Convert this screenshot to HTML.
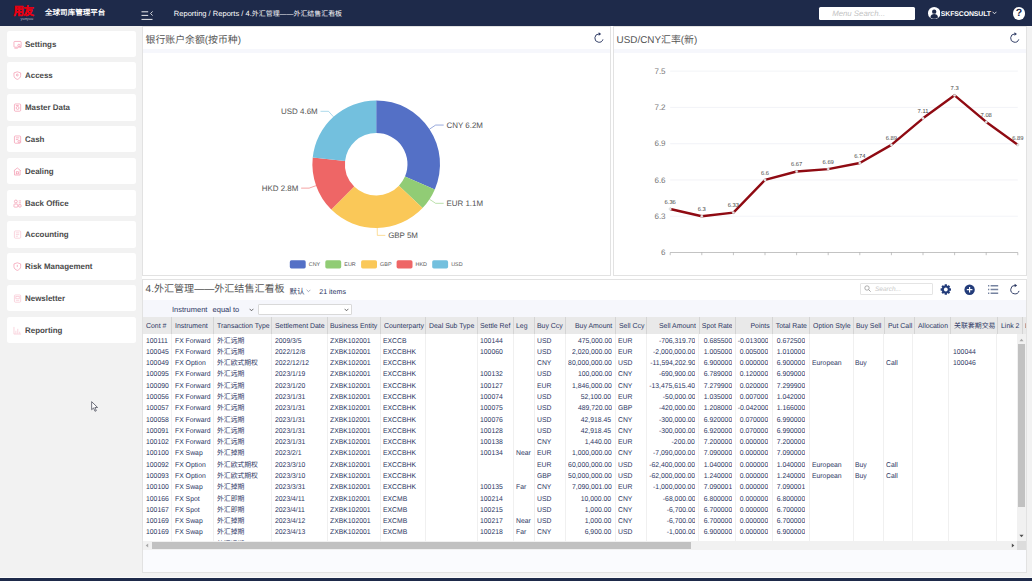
<!DOCTYPE html>
<html lang="zh-CN"><head><meta charset="utf-8"><title>Treasury Dashboard</title>
<style>
*{box-sizing:border-box;margin:0;padding:0}
html,body{width:1032px;height:581px;overflow:hidden}
body{position:relative;background:#f2f2f2;font-family:"Liberation Sans",sans-serif;color:#333;-webkit-font-smoothing:antialiased;text-rendering:geometricPrecision}
.abs{position:absolute}
#topbar{position:absolute;left:0;top:0;width:1032px;height:25.5px;background:#1e2a4a;color:#fff}
#sidebar{position:absolute;left:0;top:25.5px;width:137px;height:552.3px;background:#f2f2f2}
.nav{position:absolute;left:6.8px;width:129.5px;height:26.6px;background:#fff;border-radius:2.5px;font-weight:bold;font-size:8.1px;color:#4a4a4a;line-height:27.9px;padding-left:18.2px;white-space:nowrap}
.nav span{display:inline-block;transform:scaleX(.98);transform-origin:left center}
.nav svg{position:absolute;left:6px;top:9px;width:9px;height:9px}
.panel{position:absolute;background:#fff;overflow:hidden}
.panel:after{content:'';position:absolute;left:0;top:0;right:0;bottom:0;border:0.6px solid #e2e2e2;pointer-events:none}
.ptitle{position:absolute;left:3.4px;top:9.3px;font-size:9.9px;line-height:12px;color:#555;white-space:nowrap}
.band{position:absolute;left:0;right:0;background:#f6f7fc}
#bottombar{position:absolute;left:0;top:577.8px;width:1032px;height:3.2px;background:#1e2a4a}
.col{position:absolute;top:0;overflow:hidden;white-space:nowrap}
.th{position:absolute;top:0;height:16.4px;line-height:18.6px;font-size:7.1px;color:#2c3663;white-space:nowrap;overflow:hidden}
.th span,.td span{display:inline-block;transform:scaleX(.975);transform-origin:left center}
.r span{transform-origin:right center}
.td{position:absolute;height:11.29px;line-height:11.29px;font-size:7px;color:#2c3663;white-space:nowrap;overflow:hidden}
.r{text-align:right}
.vline{position:absolute;width:0.6px;background:#f0f0f0}
</style></head>
<body>
<div id="topbar">
<div class="abs" style="left:13.4px;top:5.6px;font-size:10.4px;line-height:12px;font-weight:bold;color:#e60012;-webkit-text-stroke:0.3px #e60012;letter-spacing:-0.4px;white-space:nowrap;transform:scaleY(1.1);transform-origin:left top">用友</div>
<div class="abs" style="left:20.6px;top:16.6px;font-size:3.9px;line-height:4px;color:#b9b9c6;white-space:nowrap">yonyou</div>
<div class="abs" style="left:45px;top:7.2px;font-size:7.55px;line-height:11px;font-weight:bold;color:#fff;white-space:nowrap">全球司库管理平台</div>
<svg class="abs" style="left:140.5px;top:9.7px" width="13" height="11" viewBox="0 0 13 11"><g stroke="#fff" stroke-width="0.9" fill="none"><path d="M0.5 1.8H7.2M0.5 5.4H7.2M0.5 9.4H11.5"/><path d="M11.6 1.4L9.6 3.5L11.6 5.6" stroke-width="0.8"/></g></svg>
<div class="abs" style="left:173.8px;top:8.2px;font-size:7.55px;line-height:11px;color:#fff;white-space:nowrap">Reporting / Reports / 4.<span style="font-size:6.95px">外汇管理——外汇结售汇看板</span></div>
<div class="abs" style="left:818.7px;top:6.7px;width:96.6px;height:13.8px;background:#fff;border-radius:1.5px;font-size:7.8px;line-height:14.6px;font-style:italic;color:#c3c3c3;padding-left:13.5px;white-space:nowrap">Menu Search...</div>
<svg class="abs" style="left:927.6px;top:6.8px" width="12.4" height="12.4" viewBox="0 0 24 24"><circle cx="12" cy="12" r="12" fill="#fff"/><circle cx="12" cy="9" r="4.2" fill="#1e2a4a"/><path d="M4.6 20.2c.6-4.6 3.6-6.4 7.4-6.4s6.800 1.800 7.400 6.400c-2 1.800-4.600 2.600-7.400 2.600s-5.400-.8-7.400-2.600z" fill="#1e2a4a"/></svg>
<div class="abs" style="left:940.8px;top:9.1px;font-size:6.9px;line-height:11px;font-weight:bold;color:#fff;white-space:nowrap;letter-spacing:-0.1px">SKFSCONSULT</div>
<svg class="abs" style="left:992.3px;top:11.3px" width="5" height="4" viewBox="0 0 5 4"><path d="M0.6 0.8L2.5 2.8L4.4 0.8" stroke="#fff" stroke-width="0.8" fill="none"/></svg>
<div class="abs" style="left:1012.6px;top:7.4px;width:12.6px;height:12.6px;border-radius:50%;background:#fff;color:#1e2a4a;font-weight:bold;font-size:10.5px;line-height:12.9px;text-align:center">?</div>
</div>
<div id="sidebar"></div>
<div class="nav" style="top:30.50px"><svg viewBox="0 0 9.400 9.400"><g fill="none" stroke="#f391a9" stroke-width="0.700"><rect x="1" y="1.5" width="7.5" height="6" rx="0.8"/><path d="M1.5 8.6H5"/><circle cx="6.2" cy="5.6" r="1.2"/><path d="M7 6.6L8.4 8.2"/></g></svg><span>Settings</span></div>
<div class="nav" style="top:62.30px"><svg viewBox="0 0 9.400 9.400"><g fill="none" stroke="#f391a9" stroke-width="0.700"><path d="M4.5 0.8L8 2V4.8C8 6.8 6.5 8 4.5 8.8C2.500 8 1 6.800 1 4.800V2Z"/><circle cx="4.5" cy="4.200" r="1"/></g></svg><span>Access</span></div>
<div class="nav" style="top:94.10px"><svg viewBox="0 0 9.400 9.400"><g fill="none" stroke="#f391a9" stroke-width="0.700"><rect x="1.500" y="1" width="6.500" height="7.600" rx="1"/><circle cx="4.800" cy="5.200" r="1.500"/><path d="M3 2.600H6"/></g></svg><span>Master Data</span></div>
<div class="nav" style="top:125.90px"><svg viewBox="0 0 9.400 9.400"><g fill="none" stroke="#f391a9" stroke-width="0.700"><rect x="1.500" y="1" width="6.500" height="7.600" rx="1"/><path d="M3 3H6.500M3 4.800H5.500"/><circle cx="6.300" cy="6.800" r="1.100"/></g></svg><span>Cash</span></div>
<div class="nav" style="top:157.70px"><svg viewBox="0 0 9.400 9.400"><g fill="none" stroke="#f391a9" stroke-width="0.700"><path d="M0.800 4L4.500 1L8.200 4"/><path d="M1.600 3.600V8.400H7.400V3.600"/><rect x="3.400" y="5" width="2.200" height="2.200"/></g></svg><span>Dealing</span></div>
<div class="nav" style="top:189.50px"><svg viewBox="0 0 9.400 9.400"><g fill="none" stroke="#f391a9" stroke-width="0.700"><circle cx="3" cy="2.600" r="1.500"/><rect x="1" y="5.300" width="4" height="3.200" rx="0.600"/><path d="M6 2H8.400M6 4H8.400"/><rect x="6" y="5.800" width="2.400" height="2.600" rx="0.500"/></g></svg><span>Back Office</span></div>
<div class="nav" style="top:221.30px"><svg viewBox="0 0 9.400 9.400"><g fill="none" stroke="#f391a9" stroke-width="0.700" style="opacity:.55"><rect x="1.500" y="1" width="6.500" height="7.600" rx="1"/><path d="M3 3H6.500M3 4.800H6.500M3 6.600H5"/></g></svg><span>Accounting</span></div>
<div class="nav" style="top:253.10px"><svg viewBox="0 0 9.400 9.400"><g fill="none" stroke="#f391a9" stroke-width="0.700"><path d="M4.500 0.800L8 2V4.800C8 6.800 6.500 8 4.500 8.800C2.500 8 1 6.800 1 4.800V2Z"/><path d="M4.500 3V5.200M4.500 6.200V6.400"/></g></svg><span>Risk Management</span></div>
<div class="nav" style="top:284.90px"><svg viewBox="0 0 9.400 9.400"><g fill="none" stroke="#f391a9" stroke-width="0.700" style="opacity:.55"><rect x="1.500" y="1" width="6.500" height="7.600" rx="1"/><rect x="3" y="2.600" width="3.500" height="2.400"/><path d="M3 6.600H6.500"/></g></svg><span>Newsletter</span></div>
<div class="nav" style="top:316.70px"><svg viewBox="0 0 9.400 9.400"><g fill="none" stroke="#f391a9" stroke-width="0.700" style="opacity:.55"><path d="M1 1V8.400H8.400"/><path d="M3 8V5M5 8V3M7 8V6"/></g></svg><span>Reporting</span></div>
<div class="abs" style="left:142.1px;top:25.5px;width:884.8px;height:547.6px;background:#fff"></div>
<div class="panel" id="p1" style="left:142.2px;top:26.0px;width:468.5px;height:249.6px">
<div class="ptitle">银行账户余额(按币种)</div>
<div class="band" style="top:22.6px;height:4.5px"></div>
<svg class="abs" style="left:0;top:0;overflow:visible" width="1" height="1"><path d="M460.95 13.38A4.15 4.15 0 1 1 456.86 7.95" fill="none" stroke="#2a3761" stroke-width="0.95"/><path d="M456.66 6.25L459.16 8.10L456.66 9.75Z" fill="#2a3761"/></svg>
<svg class="abs" style="left:0;top:0" width="468.5" height="249.6"><path d="M234.20 74.40A63.80 63.80 0 0 1 292.80 163.44L262.95 150.58A31.30 31.30 0 0 0 234.20 106.90Z" fill="#5470c6"/><path d="M287.49 103.13L293.68 99.06L301.68 99.06" fill="none" stroke="#5470c6" stroke-width="0.6"/><text x="304.48" y="101.66" font-size="7.95" fill="#525252" text-anchor="start">CNY 6.2M</text><path d="M292.80 163.44A63.80 63.80 0 0 1 280.55 182.04L256.94 159.71A31.30 31.30 0 0 0 262.95 150.58Z" fill="#91cc75"/><path d="M287.49 173.27L293.68 177.34L301.68 177.34" fill="none" stroke="#91cc75" stroke-width="0.6"/><text x="304.48" y="179.94" font-size="7.95" fill="#525252" text-anchor="start">EUR 1.1M</text><path d="M280.55 182.04A63.80 63.80 0 0 1 189.27 183.49L212.16 160.42A31.30 31.30 0 0 0 256.94 159.71Z" fill="#fac858"/><path d="M235.22 201.99L235.34 209.39L243.34 209.39" fill="none" stroke="#fac858" stroke-width="0.6"/><text x="246.14" y="211.99" font-size="7.95" fill="#525252" text-anchor="start">GBP 5M</text><path d="M189.27 183.49A63.80 63.80 0 0 1 170.74 131.60L203.07 134.96A31.30 31.30 0 0 0 212.16 160.42Z" fill="#ee6666"/><path d="M174.11 159.65L167.14 162.14L159.14 162.14" fill="none" stroke="#ee6666" stroke-width="0.6"/><text x="156.34" y="164.74" font-size="7.95" fill="#525252" text-anchor="end">HKD 2.8M</text><path d="M170.74 131.60A63.80 63.80 0 0 1 234.20 74.40L234.20 106.90A31.30 31.30 0 0 0 203.07 134.96Z" fill="#73c0de"/><path d="M191.48 90.81L186.53 85.31L178.53 85.31" fill="none" stroke="#73c0de" stroke-width="0.6"/><text x="175.73" y="87.91" font-size="7.95" fill="#525252" text-anchor="end">USD 4.6M</text><rect x="147.80" y="234.30" width="15.9" height="8.1" rx="1.6" fill="#5470c6"/><text x="166.80" y="240.30" font-size="5.4" fill="#555">CNY</text><rect x="183.30" y="234.30" width="15.9" height="8.1" rx="1.6" fill="#91cc75"/><text x="202.30" y="240.30" font-size="5.4" fill="#555">EUR</text><rect x="219.10" y="234.30" width="15.9" height="8.1" rx="1.6" fill="#fac858"/><text x="238.10" y="240.30" font-size="5.4" fill="#555">GBP</text><rect x="254.60" y="234.30" width="15.9" height="8.1" rx="1.6" fill="#ee6666"/><text x="273.60" y="240.30" font-size="5.4" fill="#555">HKD</text><rect x="290.20" y="234.30" width="15.9" height="8.1" rx="1.6" fill="#73c0de"/><text x="309.20" y="240.30" font-size="5.4" fill="#555">USD</text></svg>
</div>
<div class="panel" id="p2" style="left:613.2px;top:26.0px;width:413.4px;height:249.6px">
<div class="ptitle">USD/CNY汇率(新)</div>
<div class="band" style="top:22.6px;height:4.5px"></div>
<svg class="abs" style="left:0;top:0;overflow:visible" width="1" height="1"><path d="M405.75 13.38A4.15 4.15 0 1 1 401.66 7.95" fill="none" stroke="#2a3761" stroke-width="0.95"/><path d="M401.46 6.25L403.96 8.10L401.46 9.75Z" fill="#2a3761"/></svg>
<svg class="abs" style="left:0;top:0" width="413.4" height="249.6" font-family="Liberation Sans, sans-serif"><text x="52.60" y="229.30" font-size="8.05" fill="#787878" text-anchor="end">6</text><path d="M57.20 190.23H404.80" stroke="#e9ebf2" stroke-width="0.6"/><text x="52.60" y="193.03" font-size="8.05" fill="#787878" text-anchor="end">6.3</text><path d="M57.20 153.96H404.80" stroke="#e9ebf2" stroke-width="0.6"/><text x="52.60" y="156.76" font-size="8.05" fill="#787878" text-anchor="end">6.6</text><path d="M57.20 117.69H404.80" stroke="#e9ebf2" stroke-width="0.6"/><text x="52.60" y="120.49" font-size="8.05" fill="#787878" text-anchor="end">6.9</text><path d="M57.20 81.42H404.80" stroke="#e9ebf2" stroke-width="0.6"/><text x="52.60" y="84.22" font-size="8.05" fill="#787878" text-anchor="end">7.2</text><path d="M57.20 45.15H404.80" stroke="#e9ebf2" stroke-width="0.6"/><text x="52.60" y="47.95" font-size="8.05" fill="#787878" text-anchor="end">7.5</text><path d="M57.20 226.50H404.80" stroke="#9a9a9a" stroke-width="0.6"/><path d="M57.20 226.50v2.7" stroke="#9a9a9a" stroke-width="0.6"/><path d="M88.80 226.50v2.7" stroke="#9a9a9a" stroke-width="0.6"/><path d="M120.40 226.50v2.7" stroke="#9a9a9a" stroke-width="0.6"/><path d="M152.00 226.50v2.7" stroke="#9a9a9a" stroke-width="0.6"/><path d="M183.60 226.50v2.7" stroke="#9a9a9a" stroke-width="0.6"/><path d="M215.20 226.50v2.7" stroke="#9a9a9a" stroke-width="0.6"/><path d="M246.80 226.50v2.7" stroke="#9a9a9a" stroke-width="0.6"/><path d="M278.40 226.50v2.7" stroke="#9a9a9a" stroke-width="0.6"/><path d="M310.00 226.50v2.7" stroke="#9a9a9a" stroke-width="0.6"/><path d="M341.60 226.50v2.7" stroke="#9a9a9a" stroke-width="0.6"/><path d="M373.20 226.50v2.7" stroke="#9a9a9a" stroke-width="0.6"/><path d="M404.80 226.50v2.7" stroke="#9a9a9a" stroke-width="0.6"/><polyline points="57.20,182.98 88.80,190.23 120.40,186.60 152.00,153.96 183.60,145.50 215.20,143.08 246.80,137.03 278.40,118.90 310.00,92.30 341.60,69.33 373.20,95.93 404.80,118.90" fill="none" stroke="#8f0a12" stroke-width="2.4" stroke-linejoin="round"/><circle cx="57.20" cy="182.98" r="1.2" fill="#ececec" stroke="#c4c4c4" stroke-width="0.45"/><text x="57.20" y="177.78" font-size="5.8" fill="#444" text-anchor="middle">6.36</text><circle cx="88.80" cy="190.23" r="1.2" fill="#ececec" stroke="#c4c4c4" stroke-width="0.45"/><text x="88.80" y="185.03" font-size="5.8" fill="#444" text-anchor="middle">6.3</text><circle cx="120.40" cy="186.60" r="1.2" fill="#ececec" stroke="#c4c4c4" stroke-width="0.45"/><text x="120.40" y="181.40" font-size="5.8" fill="#444" text-anchor="middle">6.33</text><circle cx="152.00" cy="153.96" r="1.2" fill="#ececec" stroke="#c4c4c4" stroke-width="0.45"/><text x="152.00" y="148.76" font-size="5.8" fill="#444" text-anchor="middle">6.6</text><circle cx="183.60" cy="145.50" r="1.2" fill="#ececec" stroke="#c4c4c4" stroke-width="0.45"/><text x="183.60" y="140.30" font-size="5.8" fill="#444" text-anchor="middle">6.67</text><circle cx="215.20" cy="143.08" r="1.2" fill="#ececec" stroke="#c4c4c4" stroke-width="0.45"/><text x="215.20" y="137.88" font-size="5.8" fill="#444" text-anchor="middle">6.69</text><circle cx="246.80" cy="137.03" r="1.2" fill="#ececec" stroke="#c4c4c4" stroke-width="0.45"/><text x="246.80" y="131.83" font-size="5.8" fill="#444" text-anchor="middle">6.74</text><circle cx="278.40" cy="118.90" r="1.2" fill="#ececec" stroke="#c4c4c4" stroke-width="0.45"/><text x="278.40" y="113.70" font-size="5.8" fill="#444" text-anchor="middle">6.89</text><circle cx="310.00" cy="92.30" r="1.2" fill="#ececec" stroke="#c4c4c4" stroke-width="0.45"/><text x="310.00" y="87.10" font-size="5.8" fill="#444" text-anchor="middle">7.11</text><circle cx="341.60" cy="69.33" r="1.2" fill="#ececec" stroke="#c4c4c4" stroke-width="0.45"/><text x="341.60" y="64.13" font-size="5.8" fill="#444" text-anchor="middle">7.3</text><circle cx="373.20" cy="95.93" r="1.2" fill="#ececec" stroke="#c4c4c4" stroke-width="0.45"/><text x="373.20" y="90.73" font-size="5.8" fill="#444" text-anchor="middle">7.08</text><circle cx="404.80" cy="118.90" r="1.2" fill="#ececec" stroke="#c4c4c4" stroke-width="0.45"/><text x="404.80" y="113.70" font-size="5.8" fill="#444" text-anchor="middle">6.89</text></svg>
</div>
<div class="panel" id="p3" style="left:142.2px;top:278.5px;width:884.4px;height:294.5px">
<div class="ptitle" style="top:5.3px;left:3.4px;font-size:10.05px">4.外汇管理——外汇结售汇看板</div>
<div class="abs" style="left:147.4px;top:8.2px;font-size:7.5px;line-height:9px;color:#2c3663;white-space:nowrap">默认</div>
<svg class="abs" style="left:164.2px;top:10.2px" width="5" height="4" viewBox="0 0 5 4"><path d="M0.600 0.800L2.500 2.700L4.400 0.800" stroke="#6a7390" stroke-width="0.600" fill="none"/></svg>
<div class="abs" style="left:177.0px;top:9.7px;font-size:7.1px;line-height:9px;color:#2c3663;white-space:nowrap">21 items</div>
<div class="abs" style="left:718.2px;top:4.7px;width:72.8px;height:11.4px;border:0.6px solid #e4e4e4;border-radius:1px;font-size:6.5px;line-height:12.4px;font-style:italic;color:#c9c9c9;padding-left:13.6px;white-space:nowrap">Search...</div>
<svg class="abs" style="left:721.8px;top:6.6px" width="7.5" height="7.5" viewBox="0 0 7.5 7.5"><circle cx="3" cy="3" r="2.200" fill="none" stroke="#8c8c8c" stroke-width="0.700"/><path d="M4.600 4.600L6.600 6.600" stroke="#8c8c8c" stroke-width="0.800"/></svg>
<svg class="abs" style="left:0;top:0;overflow:visible" width="1" height="1"><g transform="translate(803.80 10.50)" fill="#233c7a"><circle r="3.900"/><rect x="-1.15" y="-5.2" width="2.300" height="2.600" rx="0.300" transform="rotate(0)"/><rect x="-1.15" y="-5.2" width="2.300" height="2.600" rx="0.300" transform="rotate(45)"/><rect x="-1.15" y="-5.2" width="2.300" height="2.600" rx="0.300" transform="rotate(90)"/><rect x="-1.15" y="-5.2" width="2.300" height="2.600" rx="0.300" transform="rotate(135)"/><rect x="-1.15" y="-5.2" width="2.300" height="2.600" rx="0.300" transform="rotate(180)"/><rect x="-1.15" y="-5.2" width="2.300" height="2.600" rx="0.300" transform="rotate(225)"/><rect x="-1.15" y="-5.2" width="2.300" height="2.600" rx="0.300" transform="rotate(270)"/><rect x="-1.15" y="-5.2" width="2.300" height="2.600" rx="0.300" transform="rotate(315)"/><circle r="1.900" fill="#fff"/></g></svg>
<svg class="abs" style="left:0;top:0;overflow:visible" width="1" height="1"><g transform="translate(827.60 10.70)"><circle r="5.200" fill="#233c7a"/><path d="M-2.800 0H2.800M0 -2.800V2.800" stroke="#fff" stroke-width="1.200"/></g></svg>
<svg class="abs" style="left:846.00px;top:6.40px" width="10.400" height="9.400" viewBox="0 0 10.400 9.400"><g stroke="#7683a0" stroke-width="1.450"><path d="M0 0.8H1.300M2.600 0.8H10.200"/><path d="M0 4.5H1.300M2.600 4.5H10.200"/><path d="M0 8.3H1.300M2.600 8.3H10.200"/></g></svg>
<svg class="abs" style="left:0;top:0;overflow:visible" width="1" height="1"><path d="M877.04 11.91A4.25 4.25 0 1 1 872.85 6.35" fill="none" stroke="#2a3761" stroke-width="0.95"/><path d="M872.65 4.65L875.15 6.50L872.65 8.15Z" fill="#2a3761"/></svg>
<div class="band" style="top:21.5px;height:17.4px"></div>
<div class="abs" style="left:29.8px;top:26.8px;font-size:7.5px;line-height:9px;color:#2c3663;white-space:nowrap">Instrument</div>
<div class="abs" style="left:70.4px;top:26.8px;font-size:7.5px;line-height:9px;color:#2c3663;white-space:nowrap">equal to</div>
<svg class="abs" style="left:106.6px;top:29.1px" width="5" height="4" viewBox="0 0 5 4"><path d="M0.600 0.800L2.500 2.800L4.400 0.800" stroke="#333" stroke-width="0.700" fill="none"/></svg>
<div class="abs" style="left:116.2px;top:25.5px;width:94px;height:10.600px;background:#fff;border:0.600px solid #d9d9d9;border-radius:1px"></div>
<svg class="abs" style="left:201.4px;top:29.1px" width="5" height="4" viewBox="0 0 5 4"><path d="M0.600 0.800L2.500 2.800L4.400 0.800" stroke="#333" stroke-width="0.700" fill="none"/></svg>
<div class="abs" id="tbl" style="left:0;top:38.90px;width:884.4px;height:224.20px;overflow:hidden">
<div class="abs" style="left:0;top:0;width:100%;height:16.4px;background:#e9e9e9"></div>
<div class="th" style="left:3.60px;width:25.10px"><span>Cont #</span></div>
<div class="vline" style="left:28.90px;top:0;height:16.4px;background:#d4d4d4"></div>
<div class="vline" style="left:28.90px;top:16.4px;height:207.8px"></div>
<div class="th" style="left:32.80px;width:38.30px"><span>Instrument</span></div>
<div class="vline" style="left:71.30px;top:0;height:16.4px;background:#d4d4d4"></div>
<div class="vline" style="left:71.30px;top:16.4px;height:207.8px"></div>
<div class="th" style="left:75.10px;width:53.60px"><span>Transaction Type</span></div>
<div class="vline" style="left:128.90px;top:0;height:16.4px;background:#d4d4d4"></div>
<div class="vline" style="left:128.90px;top:16.4px;height:207.8px"></div>
<div class="th" style="left:132.90px;width:51.50px"><span>Settlement Date</span></div>
<div class="vline" style="left:184.60px;top:0;height:16.4px;background:#d4d4d4"></div>
<div class="vline" style="left:184.60px;top:16.4px;height:207.8px"></div>
<div class="th" style="left:187.80px;width:50.00px"><span>Business Entity</span></div>
<div class="vline" style="left:238.00px;top:0;height:16.4px;background:#d4d4d4"></div>
<div class="vline" style="left:238.00px;top:16.4px;height:207.8px"></div>
<div class="th" style="left:241.60px;width:41.50px"><span>Counterparty</span></div>
<div class="vline" style="left:283.30px;top:0;height:16.4px;background:#d4d4d4"></div>
<div class="vline" style="left:283.30px;top:16.4px;height:207.8px"></div>
<div class="th" style="left:287.00px;width:47.40px"><span>Deal Sub Type</span></div>
<div class="vline" style="left:334.60px;top:0;height:16.4px;background:#d4d4d4"></div>
<div class="vline" style="left:334.60px;top:16.4px;height:207.8px"></div>
<div class="th" style="left:337.80px;width:33.00px"><span>Settle Ref</span></div>
<div class="vline" style="left:371.00px;top:0;height:16.4px;background:#d4d4d4"></div>
<div class="vline" style="left:371.00px;top:16.4px;height:207.8px"></div>
<div class="th" style="left:373.70px;width:17.70px"><span>Leg</span></div>
<div class="vline" style="left:391.60px;top:0;height:16.4px;background:#d4d4d4"></div>
<div class="vline" style="left:391.60px;top:16.4px;height:207.8px"></div>
<div class="th" style="left:394.80px;width:28.00px"><span>Buy Ccy</span></div>
<div class="vline" style="left:423.00px;top:0;height:16.4px;background:#d4d4d4"></div>
<div class="vline" style="left:422.80px;top:16.4px;height:207.8px"></div>
<div class="th r" style="left:423.80px;width:46.70px"><span>Buy Amount</span></div>
<div class="vline" style="left:472.70px;top:0;height:16.4px;background:#d4d4d4"></div>
<div class="vline" style="left:472.50px;top:16.4px;height:207.8px"></div>
<div class="th" style="left:476.70px;width:27.20px"><span>Sell Ccy</span></div>
<div class="vline" style="left:504.10px;top:0;height:16.4px;background:#d4d4d4"></div>
<div class="vline" style="left:503.80px;top:16.4px;height:207.8px"></div>
<div class="th r" style="left:504.90px;width:49.20px"><span>Sell Amount</span></div>
<div class="vline" style="left:556.60px;top:0;height:16.4px;background:#d4d4d4"></div>
<div class="vline" style="left:556.30px;top:16.4px;height:207.8px"></div>
<div class="th r" style="left:557.40px;width:32.80px"><span>Spot Rate</span></div>
<div class="vline" style="left:593.00px;top:0;height:16.4px;background:#d4d4d4"></div>
<div class="vline" style="left:592.70px;top:16.4px;height:207.8px"></div>
<div class="th r" style="left:593.80px;width:34.10px"><span>Points</span></div>
<div class="vline" style="left:629.90px;top:0;height:16.4px;background:#d4d4d4"></div>
<div class="vline" style="left:629.50px;top:16.4px;height:207.8px"></div>
<div class="th r" style="left:630.70px;width:34.30px"><span>Total Rate</span></div>
<div class="vline" style="left:666.80px;top:0;height:16.4px;background:#d4d4d4"></div>
<div class="vline" style="left:666.40px;top:16.4px;height:207.8px"></div>
<div class="th" style="left:670.90px;width:39.70px"><span>Option Style</span></div>
<div class="vline" style="left:710.80px;top:0;height:16.4px;background:#d4d4d4"></div>
<div class="vline" style="left:710.50px;top:16.4px;height:207.8px"></div>
<div class="th" style="left:714.20px;width:27.70px"><span>Buy Sell</span></div>
<div class="vline" style="left:742.10px;top:0;height:16.4px;background:#d4d4d4"></div>
<div class="vline" style="left:741.10px;top:16.4px;height:207.8px"></div>
<div class="th" style="left:745.40px;width:26.40px"><span>Put Call</span></div>
<div class="vline" style="left:772.00px;top:0;height:16.4px;background:#d4d4d4"></div>
<div class="vline" style="left:770.20px;top:16.4px;height:207.8px"></div>
<div class="th" style="left:775.50px;width:32.30px"><span>Allocation</span></div>
<div class="vline" style="left:808.00px;top:0;height:16.4px;background:#d4d4d4"></div>
<div class="vline" style="left:805.90px;top:16.4px;height:207.8px"></div>
<div class="th" style="left:811.50px;width:43.00px"><span>关联套期交易</span></div>
<div class="vline" style="left:854.70px;top:0;height:16.4px;background:#d4d4d4"></div>
<div class="vline" style="left:854.10px;top:16.4px;height:207.8px"></div>
<div class="th" style="left:858.80px;width:21.30px"><span>Link 2</span></div>
<div class="vline" style="left:880.30px;top:0;height:16.4px;background:#d4d4d4"></div>
<div class="vline" style="left:879.50px;top:16.4px;height:207.8px"></div>
<div class="th" style="left:882.40px;width:34.90px"><span>Link 3</span></div>
<div class="td" style="left:4.20px;top:18.20px;width:24.50px"><span>100111</span></div>
<div class="td" style="left:32.80px;top:18.20px;width:38.30px"><span>FX Forward</span></div>
<div class="td" style="left:75.10px;top:18.20px;width:53.60px"><span>外汇远期</span></div>
<div class="td" style="left:132.90px;top:18.20px;width:51.50px"><span>2009/3/5</span></div>
<div class="td" style="left:187.80px;top:18.20px;width:50.00px"><span>ZXBK102001</span></div>
<div class="td" style="left:241.20px;top:18.20px;width:41.90px"><span>EXCCB</span></div>
<div class="td" style="left:338.10px;top:18.20px;width:32.70px"><span>100144</span></div>
<div class="td" style="left:394.80px;top:18.20px;width:27.80px"><span>USD</span></div>
<div class="td r" style="left:423.60px;top:18.20px;width:45.80px"><span>475,000.00</span></div>
<div class="td" style="left:475.90px;top:18.20px;width:27.70px"><span>EUR</span></div>
<div class="td r" style="left:504.60px;top:18.20px;width:48.40px"><span>-706,319.70</span></div>
<div class="td r" style="left:557.10px;top:18.20px;width:32.60px"><span>0.685500</span></div>
<div class="td r" style="left:593.50px;top:18.20px;width:32.80px"><span>-0.013000</span></div>
<div class="td r" style="left:630.30px;top:18.20px;width:32.40px"><span>0.672500</span></div>
<div class="td" style="left:4.20px;top:29.49px;width:24.50px"><span>100045</span></div>
<div class="td" style="left:32.80px;top:29.49px;width:38.30px"><span>FX Forward</span></div>
<div class="td" style="left:75.10px;top:29.49px;width:53.60px"><span>外汇远期</span></div>
<div class="td" style="left:132.90px;top:29.49px;width:51.50px"><span>2022/12/8</span></div>
<div class="td" style="left:187.80px;top:29.49px;width:50.00px"><span>ZXBK102001</span></div>
<div class="td" style="left:241.20px;top:29.49px;width:41.90px"><span>EXCCBHK</span></div>
<div class="td" style="left:338.10px;top:29.49px;width:32.70px"><span>100060</span></div>
<div class="td" style="left:394.80px;top:29.49px;width:27.80px"><span>USD</span></div>
<div class="td r" style="left:423.60px;top:29.49px;width:45.80px"><span>2,020,000.00</span></div>
<div class="td" style="left:475.90px;top:29.49px;width:27.70px"><span>EUR</span></div>
<div class="td r" style="left:504.60px;top:29.49px;width:48.40px"><span>-2,000,000.00</span></div>
<div class="td r" style="left:557.10px;top:29.49px;width:32.60px"><span>1.005000</span></div>
<div class="td r" style="left:593.50px;top:29.49px;width:32.80px"><span>0.005000</span></div>
<div class="td r" style="left:630.30px;top:29.49px;width:32.40px"><span>1.010000</span></div>
<div class="td" style="left:810.50px;top:29.49px;width:43.40px"><span>100044</span></div>
<div class="td" style="left:4.20px;top:40.77px;width:24.50px"><span>100049</span></div>
<div class="td" style="left:32.80px;top:40.77px;width:38.30px"><span>FX Option</span></div>
<div class="td" style="left:75.10px;top:40.77px;width:53.60px"><span>外汇欧式期权</span></div>
<div class="td" style="left:132.90px;top:40.77px;width:51.50px"><span>2022/12/12</span></div>
<div class="td" style="left:187.80px;top:40.77px;width:50.00px"><span>ZXBK102001</span></div>
<div class="td" style="left:241.20px;top:40.77px;width:41.90px"><span>EXCCBHK</span></div>
<div class="td" style="left:394.80px;top:40.77px;width:27.80px"><span>CNY</span></div>
<div class="td r" style="left:423.60px;top:40.77px;width:45.80px"><span>80,000,000.00</span></div>
<div class="td" style="left:475.90px;top:40.77px;width:27.70px"><span>USD</span></div>
<div class="td r" style="left:504.60px;top:40.77px;width:48.40px"><span>-11,594,202.90</span></div>
<div class="td r" style="left:557.10px;top:40.77px;width:32.60px"><span>6.900000</span></div>
<div class="td r" style="left:593.50px;top:40.77px;width:32.80px"><span>0.000000</span></div>
<div class="td r" style="left:630.30px;top:40.77px;width:32.40px"><span>6.900000</span></div>
<div class="td" style="left:669.90px;top:40.77px;width:40.40px"><span>European</span></div>
<div class="td" style="left:713.00px;top:40.77px;width:27.90px"><span>Buy</span></div>
<div class="td" style="left:744.30px;top:40.77px;width:25.70px"><span>Call</span></div>
<div class="td" style="left:810.50px;top:40.77px;width:43.40px"><span>100046</span></div>
<div class="td" style="left:4.20px;top:52.06px;width:24.50px"><span>100095</span></div>
<div class="td" style="left:32.80px;top:52.06px;width:38.30px"><span>FX Forward</span></div>
<div class="td" style="left:75.10px;top:52.06px;width:53.60px"><span>外汇远期</span></div>
<div class="td" style="left:132.90px;top:52.06px;width:51.50px"><span>2023/1/19</span></div>
<div class="td" style="left:187.80px;top:52.06px;width:50.00px"><span>ZXBK102001</span></div>
<div class="td" style="left:241.20px;top:52.06px;width:41.90px"><span>EXCCBHK</span></div>
<div class="td" style="left:338.10px;top:52.06px;width:32.70px"><span>100132</span></div>
<div class="td" style="left:394.80px;top:52.06px;width:27.80px"><span>USD</span></div>
<div class="td r" style="left:423.60px;top:52.06px;width:45.80px"><span>100,000.00</span></div>
<div class="td" style="left:475.90px;top:52.06px;width:27.70px"><span>CNY</span></div>
<div class="td r" style="left:504.60px;top:52.06px;width:48.40px"><span>-690,900.00</span></div>
<div class="td r" style="left:557.10px;top:52.06px;width:32.60px"><span>6.789000</span></div>
<div class="td r" style="left:593.50px;top:52.06px;width:32.80px"><span>0.120000</span></div>
<div class="td r" style="left:630.30px;top:52.06px;width:32.40px"><span>6.909000</span></div>
<div class="td" style="left:4.20px;top:63.34px;width:24.50px"><span>100090</span></div>
<div class="td" style="left:32.80px;top:63.34px;width:38.30px"><span>FX Forward</span></div>
<div class="td" style="left:75.10px;top:63.34px;width:53.60px"><span>外汇远期</span></div>
<div class="td" style="left:132.90px;top:63.34px;width:51.50px"><span>2023/1/20</span></div>
<div class="td" style="left:187.80px;top:63.34px;width:50.00px"><span>ZXBK102001</span></div>
<div class="td" style="left:241.20px;top:63.34px;width:41.90px"><span>EXCCBHK</span></div>
<div class="td" style="left:338.10px;top:63.34px;width:32.70px"><span>100127</span></div>
<div class="td" style="left:394.80px;top:63.34px;width:27.80px"><span>EUR</span></div>
<div class="td r" style="left:423.60px;top:63.34px;width:45.80px"><span>1,846,000.00</span></div>
<div class="td" style="left:475.90px;top:63.34px;width:27.70px"><span>CNY</span></div>
<div class="td r" style="left:504.60px;top:63.34px;width:48.40px"><span>-13,475,615.40</span></div>
<div class="td r" style="left:557.10px;top:63.34px;width:32.60px"><span>7.279900</span></div>
<div class="td r" style="left:593.50px;top:63.34px;width:32.80px"><span>0.020000</span></div>
<div class="td r" style="left:630.30px;top:63.34px;width:32.40px"><span>7.299900</span></div>
<div class="td" style="left:4.20px;top:74.63px;width:24.50px"><span>100056</span></div>
<div class="td" style="left:32.80px;top:74.63px;width:38.30px"><span>FX Forward</span></div>
<div class="td" style="left:75.10px;top:74.63px;width:53.60px"><span>外汇远期</span></div>
<div class="td" style="left:132.90px;top:74.63px;width:51.50px"><span>2023/1/31</span></div>
<div class="td" style="left:187.80px;top:74.63px;width:50.00px"><span>ZXBK102001</span></div>
<div class="td" style="left:241.20px;top:74.63px;width:41.90px"><span>EXCCBHK</span></div>
<div class="td" style="left:338.10px;top:74.63px;width:32.70px"><span>100074</span></div>
<div class="td" style="left:394.80px;top:74.63px;width:27.80px"><span>USD</span></div>
<div class="td r" style="left:423.60px;top:74.63px;width:45.80px"><span>52,100.00</span></div>
<div class="td" style="left:475.90px;top:74.63px;width:27.70px"><span>EUR</span></div>
<div class="td r" style="left:504.60px;top:74.63px;width:48.40px"><span>-50,000.00</span></div>
<div class="td r" style="left:557.10px;top:74.63px;width:32.60px"><span>1.035000</span></div>
<div class="td r" style="left:593.50px;top:74.63px;width:32.80px"><span>0.007000</span></div>
<div class="td r" style="left:630.30px;top:74.63px;width:32.40px"><span>1.042000</span></div>
<div class="td" style="left:4.20px;top:85.91px;width:24.50px"><span>100057</span></div>
<div class="td" style="left:32.80px;top:85.91px;width:38.30px"><span>FX Forward</span></div>
<div class="td" style="left:75.10px;top:85.91px;width:53.60px"><span>外汇远期</span></div>
<div class="td" style="left:132.90px;top:85.91px;width:51.50px"><span>2023/1/31</span></div>
<div class="td" style="left:187.80px;top:85.91px;width:50.00px"><span>ZXBK102001</span></div>
<div class="td" style="left:241.20px;top:85.91px;width:41.90px"><span>EXCCBHK</span></div>
<div class="td" style="left:338.10px;top:85.91px;width:32.70px"><span>100075</span></div>
<div class="td" style="left:394.80px;top:85.91px;width:27.80px"><span>USD</span></div>
<div class="td r" style="left:423.60px;top:85.91px;width:45.80px"><span>489,720.00</span></div>
<div class="td" style="left:475.90px;top:85.91px;width:27.70px"><span>GBP</span></div>
<div class="td r" style="left:504.60px;top:85.91px;width:48.40px"><span>-420,000.00</span></div>
<div class="td r" style="left:557.10px;top:85.91px;width:32.60px"><span>1.208000</span></div>
<div class="td r" style="left:593.50px;top:85.91px;width:32.80px"><span>-0.042000</span></div>
<div class="td r" style="left:630.30px;top:85.91px;width:32.40px"><span>1.166000</span></div>
<div class="td" style="left:4.20px;top:97.20px;width:24.50px"><span>100058</span></div>
<div class="td" style="left:32.80px;top:97.20px;width:38.30px"><span>FX Forward</span></div>
<div class="td" style="left:75.10px;top:97.20px;width:53.60px"><span>外汇远期</span></div>
<div class="td" style="left:132.90px;top:97.20px;width:51.50px"><span>2023/1/31</span></div>
<div class="td" style="left:187.80px;top:97.20px;width:50.00px"><span>ZXBK102001</span></div>
<div class="td" style="left:241.20px;top:97.20px;width:41.90px"><span>EXCCBHK</span></div>
<div class="td" style="left:338.10px;top:97.20px;width:32.70px"><span>100076</span></div>
<div class="td" style="left:394.80px;top:97.20px;width:27.80px"><span>USD</span></div>
<div class="td r" style="left:423.60px;top:97.20px;width:45.80px"><span>42,918.45</span></div>
<div class="td" style="left:475.90px;top:97.20px;width:27.70px"><span>CNY</span></div>
<div class="td r" style="left:504.60px;top:97.20px;width:48.40px"><span>-300,000.00</span></div>
<div class="td r" style="left:557.10px;top:97.20px;width:32.60px"><span>6.920000</span></div>
<div class="td r" style="left:593.50px;top:97.20px;width:32.80px"><span>0.070000</span></div>
<div class="td r" style="left:630.30px;top:97.20px;width:32.40px"><span>6.990000</span></div>
<div class="td" style="left:4.20px;top:108.48px;width:24.50px"><span>100091</span></div>
<div class="td" style="left:32.80px;top:108.48px;width:38.30px"><span>FX Forward</span></div>
<div class="td" style="left:75.10px;top:108.48px;width:53.60px"><span>外汇远期</span></div>
<div class="td" style="left:132.90px;top:108.48px;width:51.50px"><span>2023/1/31</span></div>
<div class="td" style="left:187.80px;top:108.48px;width:50.00px"><span>ZXBK102001</span></div>
<div class="td" style="left:241.20px;top:108.48px;width:41.90px"><span>EXCCBHK</span></div>
<div class="td" style="left:338.10px;top:108.48px;width:32.70px"><span>100128</span></div>
<div class="td" style="left:394.80px;top:108.48px;width:27.80px"><span>USD</span></div>
<div class="td r" style="left:423.60px;top:108.48px;width:45.80px"><span>42,918.45</span></div>
<div class="td" style="left:475.90px;top:108.48px;width:27.70px"><span>CNY</span></div>
<div class="td r" style="left:504.60px;top:108.48px;width:48.40px"><span>-300,000.00</span></div>
<div class="td r" style="left:557.10px;top:108.48px;width:32.60px"><span>6.920000</span></div>
<div class="td r" style="left:593.50px;top:108.48px;width:32.80px"><span>0.070000</span></div>
<div class="td r" style="left:630.30px;top:108.48px;width:32.40px"><span>6.990000</span></div>
<div class="td" style="left:4.20px;top:119.77px;width:24.50px"><span>100102</span></div>
<div class="td" style="left:32.80px;top:119.77px;width:38.30px"><span>FX Forward</span></div>
<div class="td" style="left:75.10px;top:119.77px;width:53.60px"><span>外汇远期</span></div>
<div class="td" style="left:132.90px;top:119.77px;width:51.50px"><span>2023/1/31</span></div>
<div class="td" style="left:187.80px;top:119.77px;width:50.00px"><span>ZXBK102001</span></div>
<div class="td" style="left:241.20px;top:119.77px;width:41.90px"><span>EXCCBHK</span></div>
<div class="td" style="left:338.10px;top:119.77px;width:32.70px"><span>100138</span></div>
<div class="td" style="left:394.80px;top:119.77px;width:27.80px"><span>CNY</span></div>
<div class="td r" style="left:423.60px;top:119.77px;width:45.80px"><span>1,440.00</span></div>
<div class="td" style="left:475.90px;top:119.77px;width:27.70px"><span>EUR</span></div>
<div class="td r" style="left:504.60px;top:119.77px;width:48.40px"><span>-200.00</span></div>
<div class="td r" style="left:557.10px;top:119.77px;width:32.60px"><span>7.200000</span></div>
<div class="td r" style="left:593.50px;top:119.77px;width:32.80px"><span>0.000000</span></div>
<div class="td r" style="left:630.30px;top:119.77px;width:32.40px"><span>7.200000</span></div>
<div class="td" style="left:4.20px;top:131.05px;width:24.50px"><span>100100</span></div>
<div class="td" style="left:32.80px;top:131.05px;width:38.30px"><span>FX Swap</span></div>
<div class="td" style="left:75.10px;top:131.05px;width:53.60px"><span>外汇掉期</span></div>
<div class="td" style="left:132.90px;top:131.05px;width:51.50px"><span>2023/2/1</span></div>
<div class="td" style="left:187.80px;top:131.05px;width:50.00px"><span>ZXBK102001</span></div>
<div class="td" style="left:241.20px;top:131.05px;width:41.90px"><span>EXCCBHK</span></div>
<div class="td" style="left:338.10px;top:131.05px;width:32.70px"><span>100134</span></div>
<div class="td" style="left:373.60px;top:131.05px;width:17.80px"><span>Near</span></div>
<div class="td" style="left:394.80px;top:131.05px;width:27.80px"><span>EUR</span></div>
<div class="td r" style="left:423.60px;top:131.05px;width:45.80px"><span>1,000,000.00</span></div>
<div class="td" style="left:475.90px;top:131.05px;width:27.70px"><span>CNY</span></div>
<div class="td r" style="left:504.60px;top:131.05px;width:48.40px"><span>-7,090,000.00</span></div>
<div class="td r" style="left:557.10px;top:131.05px;width:32.60px"><span>7.090000</span></div>
<div class="td r" style="left:593.50px;top:131.05px;width:32.80px"><span>0.000000</span></div>
<div class="td r" style="left:630.30px;top:131.05px;width:32.40px"><span>7.090000</span></div>
<div class="td" style="left:4.20px;top:142.34px;width:24.50px"><span>100092</span></div>
<div class="td" style="left:32.80px;top:142.34px;width:38.30px"><span>FX Option</span></div>
<div class="td" style="left:75.10px;top:142.34px;width:53.60px"><span>外汇欧式期权</span></div>
<div class="td" style="left:132.90px;top:142.34px;width:51.50px"><span>2023/3/10</span></div>
<div class="td" style="left:187.80px;top:142.34px;width:50.00px"><span>ZXBK102001</span></div>
<div class="td" style="left:241.20px;top:142.34px;width:41.90px"><span>EXCCBHK</span></div>
<div class="td" style="left:394.80px;top:142.34px;width:27.80px"><span>EUR</span></div>
<div class="td r" style="left:423.60px;top:142.34px;width:45.80px"><span>60,000,000.00</span></div>
<div class="td" style="left:475.90px;top:142.34px;width:27.70px"><span>USD</span></div>
<div class="td r" style="left:504.60px;top:142.34px;width:48.40px"><span>-62,400,000.00</span></div>
<div class="td r" style="left:557.10px;top:142.34px;width:32.60px"><span>1.040000</span></div>
<div class="td r" style="left:593.50px;top:142.34px;width:32.80px"><span>0.000000</span></div>
<div class="td r" style="left:630.30px;top:142.34px;width:32.40px"><span>1.040000</span></div>
<div class="td" style="left:669.90px;top:142.34px;width:40.40px"><span>European</span></div>
<div class="td" style="left:713.00px;top:142.34px;width:27.90px"><span>Buy</span></div>
<div class="td" style="left:744.30px;top:142.34px;width:25.70px"><span>Call</span></div>
<div class="td" style="left:4.20px;top:153.62px;width:24.50px"><span>100093</span></div>
<div class="td" style="left:32.80px;top:153.62px;width:38.30px"><span>FX Option</span></div>
<div class="td" style="left:75.10px;top:153.62px;width:53.60px"><span>外汇欧式期权</span></div>
<div class="td" style="left:132.90px;top:153.62px;width:51.50px"><span>2023/3/10</span></div>
<div class="td" style="left:187.80px;top:153.62px;width:50.00px"><span>ZXBK102001</span></div>
<div class="td" style="left:241.20px;top:153.62px;width:41.90px"><span>EXCCBHK</span></div>
<div class="td" style="left:394.80px;top:153.62px;width:27.80px"><span>GBP</span></div>
<div class="td r" style="left:423.60px;top:153.62px;width:45.80px"><span>50,000,000.00</span></div>
<div class="td" style="left:475.90px;top:153.62px;width:27.70px"><span>USD</span></div>
<div class="td r" style="left:504.60px;top:153.62px;width:48.40px"><span>-62,000,000.00</span></div>
<div class="td r" style="left:557.10px;top:153.62px;width:32.60px"><span>1.240000</span></div>
<div class="td r" style="left:593.50px;top:153.62px;width:32.80px"><span>0.000000</span></div>
<div class="td r" style="left:630.30px;top:153.62px;width:32.40px"><span>1.240000</span></div>
<div class="td" style="left:669.90px;top:153.62px;width:40.40px"><span>European</span></div>
<div class="td" style="left:713.00px;top:153.62px;width:27.90px"><span>Buy</span></div>
<div class="td" style="left:744.30px;top:153.62px;width:25.70px"><span>Call</span></div>
<div class="td" style="left:4.20px;top:164.91px;width:24.50px"><span>100100</span></div>
<div class="td" style="left:32.80px;top:164.91px;width:38.30px"><span>FX Swap</span></div>
<div class="td" style="left:75.10px;top:164.91px;width:53.60px"><span>外汇掉期</span></div>
<div class="td" style="left:132.90px;top:164.91px;width:51.50px"><span>2023/3/31</span></div>
<div class="td" style="left:187.80px;top:164.91px;width:50.00px"><span>ZXBK102001</span></div>
<div class="td" style="left:241.20px;top:164.91px;width:41.90px"><span>EXCCBHK</span></div>
<div class="td" style="left:338.10px;top:164.91px;width:32.70px"><span>100135</span></div>
<div class="td" style="left:373.60px;top:164.91px;width:17.80px"><span>Far</span></div>
<div class="td" style="left:394.80px;top:164.91px;width:27.80px"><span>CNY</span></div>
<div class="td r" style="left:423.60px;top:164.91px;width:45.80px"><span>7,090,001.00</span></div>
<div class="td" style="left:475.90px;top:164.91px;width:27.70px"><span>EUR</span></div>
<div class="td r" style="left:504.60px;top:164.91px;width:48.40px"><span>-1,000,000.00</span></div>
<div class="td r" style="left:557.10px;top:164.91px;width:32.60px"><span>7.090001</span></div>
<div class="td r" style="left:593.50px;top:164.91px;width:32.80px"><span>0.000000</span></div>
<div class="td r" style="left:630.30px;top:164.91px;width:32.40px"><span>7.090001</span></div>
<div class="td" style="left:4.20px;top:176.19px;width:24.50px"><span>100166</span></div>
<div class="td" style="left:32.80px;top:176.19px;width:38.30px"><span>FX Spot</span></div>
<div class="td" style="left:75.10px;top:176.19px;width:53.60px"><span>外汇即期</span></div>
<div class="td" style="left:132.90px;top:176.19px;width:51.50px"><span>2023/4/11</span></div>
<div class="td" style="left:187.80px;top:176.19px;width:50.00px"><span>ZXBK102001</span></div>
<div class="td" style="left:241.20px;top:176.19px;width:41.90px"><span>EXCMB</span></div>
<div class="td" style="left:338.10px;top:176.19px;width:32.70px"><span>100214</span></div>
<div class="td" style="left:394.80px;top:176.19px;width:27.80px"><span>USD</span></div>
<div class="td r" style="left:423.60px;top:176.19px;width:45.80px"><span>10,000.00</span></div>
<div class="td" style="left:475.90px;top:176.19px;width:27.70px"><span>CNY</span></div>
<div class="td r" style="left:504.60px;top:176.19px;width:48.40px"><span>-68,000.00</span></div>
<div class="td r" style="left:557.10px;top:176.19px;width:32.60px"><span>6.800000</span></div>
<div class="td r" style="left:593.50px;top:176.19px;width:32.80px"><span>0.000000</span></div>
<div class="td r" style="left:630.30px;top:176.19px;width:32.40px"><span>6.800000</span></div>
<div class="td" style="left:4.20px;top:187.48px;width:24.50px"><span>100167</span></div>
<div class="td" style="left:32.80px;top:187.48px;width:38.30px"><span>FX Spot</span></div>
<div class="td" style="left:75.10px;top:187.48px;width:53.60px"><span>外汇即期</span></div>
<div class="td" style="left:132.90px;top:187.48px;width:51.50px"><span>2023/4/11</span></div>
<div class="td" style="left:187.80px;top:187.48px;width:50.00px"><span>ZXBK102001</span></div>
<div class="td" style="left:241.20px;top:187.48px;width:41.90px"><span>EXCMB</span></div>
<div class="td" style="left:338.10px;top:187.48px;width:32.70px"><span>100215</span></div>
<div class="td" style="left:394.80px;top:187.48px;width:27.80px"><span>USD</span></div>
<div class="td r" style="left:423.60px;top:187.48px;width:45.80px"><span>1,000.00</span></div>
<div class="td" style="left:475.90px;top:187.48px;width:27.70px"><span>CNY</span></div>
<div class="td r" style="left:504.60px;top:187.48px;width:48.40px"><span>-6,700.00</span></div>
<div class="td r" style="left:557.10px;top:187.48px;width:32.60px"><span>6.700000</span></div>
<div class="td r" style="left:593.50px;top:187.48px;width:32.80px"><span>0.000000</span></div>
<div class="td r" style="left:630.30px;top:187.48px;width:32.40px"><span>6.700000</span></div>
<div class="td" style="left:4.20px;top:198.76px;width:24.50px"><span>100169</span></div>
<div class="td" style="left:32.80px;top:198.76px;width:38.30px"><span>FX Swap</span></div>
<div class="td" style="left:75.10px;top:198.76px;width:53.60px"><span>外汇掉期</span></div>
<div class="td" style="left:132.90px;top:198.76px;width:51.50px"><span>2023/4/12</span></div>
<div class="td" style="left:187.80px;top:198.76px;width:50.00px"><span>ZXBK102001</span></div>
<div class="td" style="left:241.20px;top:198.76px;width:41.90px"><span>EXCMB</span></div>
<div class="td" style="left:338.10px;top:198.76px;width:32.70px"><span>100217</span></div>
<div class="td" style="left:373.60px;top:198.76px;width:17.80px"><span>Near</span></div>
<div class="td" style="left:394.80px;top:198.76px;width:27.80px"><span>USD</span></div>
<div class="td r" style="left:423.60px;top:198.76px;width:45.80px"><span>1,000.00</span></div>
<div class="td" style="left:475.90px;top:198.76px;width:27.70px"><span>CNY</span></div>
<div class="td r" style="left:504.60px;top:198.76px;width:48.40px"><span>-6,700.00</span></div>
<div class="td r" style="left:557.10px;top:198.76px;width:32.60px"><span>6.700000</span></div>
<div class="td r" style="left:593.50px;top:198.76px;width:32.80px"><span>0.000000</span></div>
<div class="td r" style="left:630.30px;top:198.76px;width:32.40px"><span>6.700000</span></div>
<div class="td" style="left:4.20px;top:210.05px;width:24.50px"><span>100169</span></div>
<div class="td" style="left:32.80px;top:210.05px;width:38.30px"><span>FX Swap</span></div>
<div class="td" style="left:75.10px;top:210.05px;width:53.60px"><span>外汇掉期</span></div>
<div class="td" style="left:132.90px;top:210.05px;width:51.50px"><span>2023/4/13</span></div>
<div class="td" style="left:187.80px;top:210.05px;width:50.00px"><span>ZXBK102001</span></div>
<div class="td" style="left:241.20px;top:210.05px;width:41.90px"><span>EXCMB</span></div>
<div class="td" style="left:338.10px;top:210.05px;width:32.70px"><span>100218</span></div>
<div class="td" style="left:373.60px;top:210.05px;width:17.80px"><span>Far</span></div>
<div class="td" style="left:394.80px;top:210.05px;width:27.80px"><span>CNY</span></div>
<div class="td r" style="left:423.60px;top:210.05px;width:45.80px"><span>6,900.00</span></div>
<div class="td" style="left:475.90px;top:210.05px;width:27.70px"><span>USD</span></div>
<div class="td r" style="left:504.60px;top:210.05px;width:48.40px"><span>-1,000.00</span></div>
<div class="td r" style="left:557.10px;top:210.05px;width:32.60px"><span>6.900000</span></div>
<div class="td r" style="left:593.50px;top:210.05px;width:32.80px"><span>0.000000</span></div>
<div class="td r" style="left:630.30px;top:210.05px;width:32.40px"><span>6.900000</span></div>
<div class="td" style="left:4.20px;top:221.33px;width:24.50px"><span>100168</span></div>
<div class="td" style="left:32.80px;top:221.33px;width:38.30px"><span>FX Forward</span></div>
<div class="td" style="left:75.10px;top:221.33px;width:53.60px"><span>外汇远期</span></div>
<div class="td" style="left:132.90px;top:221.33px;width:51.50px"><span>2023/4/28</span></div>
<div class="td" style="left:187.80px;top:221.33px;width:50.00px"><span>ZXBK102001</span></div>
<div class="td" style="left:241.20px;top:221.33px;width:41.90px"><span>EXCCBHK</span></div>
<div class="td" style="left:338.10px;top:221.33px;width:32.70px"><span>100216</span></div>
<div class="td" style="left:394.80px;top:221.33px;width:27.80px"><span>USD</span></div>
<div class="td r" style="left:423.60px;top:221.33px;width:45.80px"><span>1,000.00</span></div>
<div class="td" style="left:475.90px;top:221.33px;width:27.70px"><span>CNY</span></div>
<div class="td r" style="left:504.60px;top:221.33px;width:48.40px"><span>-7,100.00</span></div>
<div class="td r" style="left:557.10px;top:221.33px;width:32.60px"><span>7.000000</span></div>
<div class="td r" style="left:593.50px;top:221.33px;width:32.80px"><span>0.100000</span></div>
<div class="td r" style="left:630.30px;top:221.33px;width:32.40px"><span>7.100000</span></div>
</div>
<div class="abs" style="left:875.0px;top:55.3px;width:9.100px;height:207.4px;background:#f1f1f1"></div>
<div class="abs" style="left:876.1px;top:65.7px;width:6.800px;height:163.3px;background:#c1c1c1"></div>
<svg class="abs" style="left:876.8px;top:59.1px" width="5" height="4" viewBox="0 0 5 4"><path d="M0.500 3.200L2.500 0.800L4.500 3.200Z" fill="#a8a8a8"/></svg>
<svg class="abs" style="left:876.7px;top:255.8px" width="5" height="4" viewBox="0 0 5 4"><path d="M0.400 0.800L2.500 3.300L4.600 0.800Z" fill="#505050"/></svg>
<div class="abs" style="left:0;top:262.7px;width:875.0px;height:9.200px;background:#f1f1f1"></div>
<div class="abs" style="left:875.0px;top:262.7px;width:9.200px;height:9.200px;background:#dcdcdc"></div>
<div class="abs" style="left:9.5px;top:263.9px;width:539.5px;height:6.800px;background:#c1c1c1"></div>
<svg class="abs" style="left:3.0px;top:264.8px" width="4" height="5" viewBox="0 0 4 5"><path d="M3.200 0.400L0.700 2.500L3.200 4.600Z" fill="#a8a8a8"/></svg>
<svg class="abs" style="left:868.4px;top:264.8px" width="4" height="5" viewBox="0 0 4 5"><path d="M0.800 0.400L3.300 2.500L0.800 4.600Z" fill="#505050"/></svg>
<div class="band" style="top:271.9px;height:22.6px;background:#fafbfe"></div>
</div>
<div class="abs" style="left:0;top:576.9px;width:1032px;height:1px;background:#fbfbfb"></div>
<div id="bottombar"></div>
<svg class="abs" style="left:90.700px;top:400.900px" width="8.55" height="11.4" viewBox="0 0 9 12"><path d="M0.700 0.700V9.200L2.700 7.300L4.200 10.800L5.600 10.200L4.100 6.800H6.900Z" fill="#fff" stroke="#3a3d4c" stroke-width="0.750" stroke-linejoin="round"/></svg>
</body></html>
